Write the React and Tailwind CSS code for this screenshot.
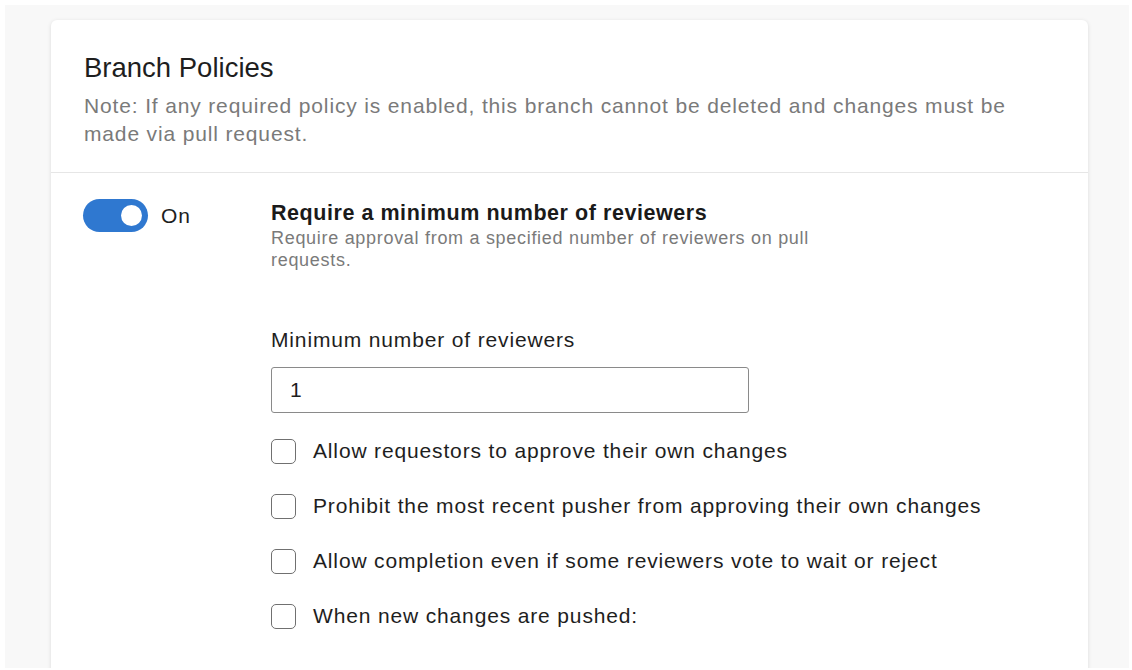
const options = [
  'Allow requestors to approve their own changes',
  'Prohibit the most recent pusher from approving their own changes',
  'Allow completion even if some reviewers vote to wait or reject',
  'When new changes are pushed:',
];

const Toggle = ({ on }) => (
  <div className="flex items-center gap-[13px] -ml-px">
    <div className={`w-[65px] h-[33px] rounded-full flex items-center justify-end pr-[6px] ${on ? 'bg-[#2f78d0]' : 'bg-gray-300'}`}>
      <div className="w-[21px] h-[21px] rounded-full bg-white" />
    </div>
    <span className="text-[21px] tracking-[0.8px] leading-[28px] text-[#1e1e1e]">On</span>
  </div>
);

export default function App() {
  return (
    <div className="w-[1132px] h-[670px] bg-white pt-[5px] pl-[5px] pr-[3px] pb-[2px]" style={{ fontFamily: '"Liberation Sans", Arial, sans-serif' }}>
      <div className="h-full bg-[#f8f8f8] pt-[15px] pl-[46px] pr-[41px] overflow-hidden">
        <div className="h-[700px] bg-white rounded-[6px] shadow-[0_1px_4px_rgba(0,0,0,0.12)]">
          {/* Header */}
          <div className="pl-[33px] pr-[45px] pt-[30px] pb-[24px] border-b border-[#e6e6e6]">
            <h1 className="text-[27.5px] leading-[36px] text-[#1e1e1e]">Branch Policies</h1>
            <p className="mt-[6px] text-[21px] tracking-[0.85px] leading-[28px] text-[#7a7a7a]">
              Note: If any required policy is enabled, this branch cannot be deleted and changes must be made via pull request.
            </p>
          </div>

          {/* Policy */}
          <div className="flex px-[33px] pt-[26px]">
            <div className="w-[187px] shrink-0">
              <Toggle on />
            </div>
            <div className="flex-1">
              <div className="text-[21.5px] tracking-[0.55px] leading-[28px] font-bold text-[#1a1a1a]">Require a minimum number of reviewers</div>
              <p className="max-w-[570px] text-[18px] tracking-[0.7px] leading-[22px] text-[#7a7a7a]">
                Require approval from a specified number of reviewers on pull requests.
              </p>

              <div className="mt-[55px] text-[21px] tracking-[0.85px] leading-[28px] text-[#1e1e1e]">Minimum number of reviewers</div>
              <div className="mt-[13px] w-[478px] h-[46px] border border-[#8a8a8a] rounded-[3px] flex items-center pl-[18px] text-[21px] text-[#1e1e1e]">
                1
              </div>

              <div className="mt-[24px] flex flex-col gap-[27px]">
                {options.map((label) => (
                  <label key={label} className="flex items-center gap-[17px] h-[28px]">
                    <span className="w-[25px] h-[25px] rounded-[5px] border-[1.5px] border-[#707070] bg-white shrink-0" />
                    <span className="text-[21px] tracking-[0.85px] leading-[28px] text-[#1e1e1e]">{label}</span>
                  </label>
                ))}
              </div>
            </div>
          </div>
        </div>
      </div>
    </div>
  );
}
